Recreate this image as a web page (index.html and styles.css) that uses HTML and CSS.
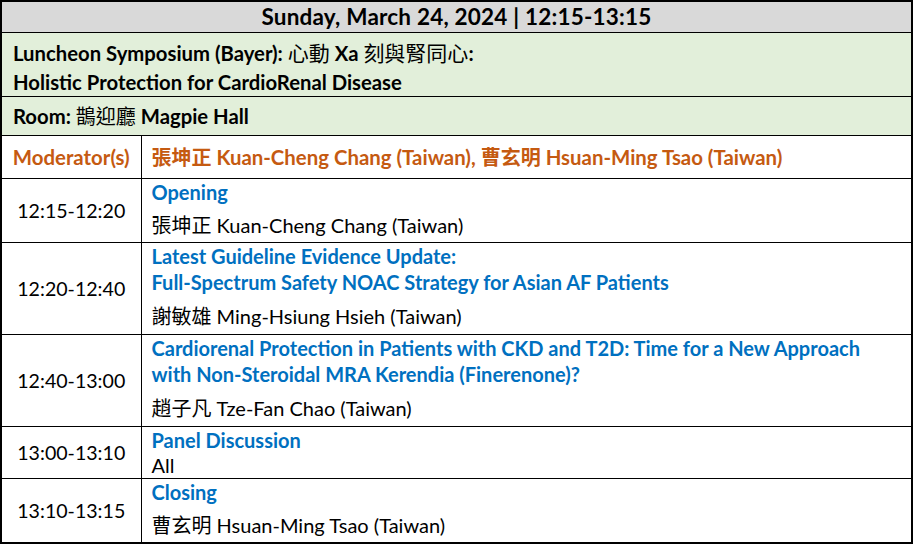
FILE: index.html
```html
<!DOCTYPE html>
<html>
<head>
<meta charset="utf-8">
<link rel="stylesheet" href="styles.css">
</head>
<body>
<table class="prog">
  <colgroup><col class="c1"><col class="c2"></colgroup>
  <tr class="hdr"><td colspan="2">Sunday, March 24, 2024 | 12:15-13:15</td></tr>
  <tr class="green sym"><td colspan="2">
    <div class="l1">Luncheon Symposium (Bayer): <span class="cjk">心動</span> Xa <span class="cjk">刻與腎同心</span>:</div>
    <div class="l2">Holistic Protection for CardioRenal Disease</div>
  </td></tr>
  <tr class="green room"><td colspan="2"><div>Room: <span class="cjk">鵲迎廳</span> Magpie Hall</div></td></tr>
  <tr class="mod">
    <td class="time">Moderator(s)</td>
    <td class="txt"><span class="cjk">張坤正</span> Kuan-Cheng Chang (Taiwan), <span class="cjk">曹玄明</span> Hsuan-Ming Tsao (Taiwan)</td>
  </tr>
  <tr>
    <td class="time">12:15-12:20</td>
    <td class="txt"><div class="t">Opening</div><div class="n"><span class="cjk">張坤正</span> Kuan-Cheng Chang (Taiwan)</div></td>
  </tr>
  <tr class="tall">
    <td class="time">12:20-12:40</td>
    <td class="txt"><div class="t">Latest Guideline Evidence Update:</div><div class="t">Full-Spectrum Safety NOAC Strategy for Asian AF Patients</div><div class="n"><span class="cjk">謝敏雄</span> Ming-Hsiung Hsieh (Taiwan)</div></td>
  </tr>
  <tr class="tall">
    <td class="time">12:40-13:00</td>
    <td class="txt"><div class="t">Cardiorenal Protection in Patients with CKD and T2D: Time for a New Approach</div><div class="t">with Non-Steroidal MRA Kerendia (Finerenone)?</div><div class="n"><span class="cjk">趙子凡</span> Tze-Fan Chao (Taiwan)</div></td>
  </tr>
  <tr>
    <td class="time">13:00-13:10</td>
    <td class="txt"><div class="t">Panel Discussion</div><div class="p">All</div></td>
  </tr>
  <tr>
    <td class="time">13:10-13:15</td>
    <td class="txt"><div class="t">Closing</div><div class="n"><span class="cjk">曹玄明</span> Hsuan-Ming Tsao (Taiwan)</div></td>
  </tr>
</table>
</body>
</html>
```
FILE: styles.css
```css
html, body { margin: 0; padding: 0; background: #fff; }
.prog {
  border-collapse: collapse;
  width: 913px;
  font-family: Lato, "Noto Sans CJK TC", sans-serif;
  font-size: 20px;
  color: #000;
  table-layout: fixed;
}
.c1 { width: 140px; }
.prog td {
  border: 1px solid #000;
  padding: 0;
  vertical-align: top;
  white-space: nowrap;
}
.prog tr:first-child td { border-top-width: 2px; }
.prog td:first-child { border-left-width: 2px; }
.prog td:last-child { border-right-width: 2px; }
.prog tr:last-child td { border-bottom-width: 2px; }
.cjk {
  font-family: "Noto Sans CJK TC", sans-serif;
  font-size: 20px;
  font-weight: 400;
  line-height: 1;
}

.hdr td {
  background: #d9d9d9;
  text-align: center;
  font-weight: 700;
  font-size: 22.5px;
  letter-spacing: 0.2px;
  line-height: 30px;
}

.green td {
  background: #e2efda;
  font-weight: 700;
  font-size: 20.3px;
  padding-left: 11px;
}
.sym .cjk { font-size: 21px; }
.sym .l1 { padding-top: 5px; line-height: 30px; }
.sym .l2 { line-height: 28px; }
.room td { line-height: 38px; }

.time { text-align: center; line-height: 26px; font-size: 19.6px; }
.prog td.time { vertical-align: middle; }
.prog td.txt { padding-left: 10px; }

.mod td {
  color: #c55a11;
  font-weight: 700;
  font-size: 20.4px;
  line-height: 42px;
}
.mod .cjk { font-weight: 700; }

.t { color: #0070c0; font-weight: 700; font-size: 20px; line-height: 26px; }
.n { padding-top: 3px; line-height: 34px; }
.tall .n { padding-top: 3px; line-height: 36px; }
.p { line-height: 25px; }
```
